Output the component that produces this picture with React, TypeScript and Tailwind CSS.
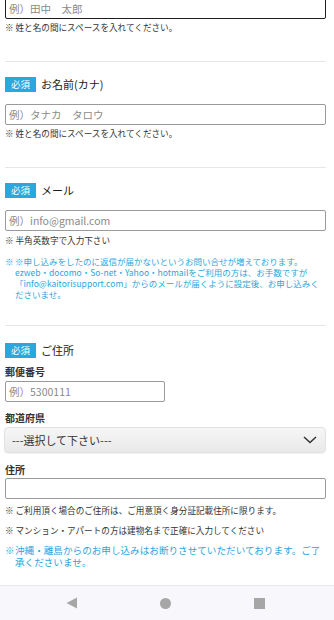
import React from "react";

const jp = { fontFamily: '"Noto Sans CJK JP", "Noto Sans", sans-serif' };

function Badge({ label }: { label: string }) {
  return (
    <div className="flex items-center h-[15px]">
      <span className="flex items-center justify-center w-[31px] h-[15px] bg-[#2ba6de] text-white text-[9.5px] leading-none">
        必須
      </span>
      <span className="ml-[5px] text-[11px] leading-none font-normal text-[#1a1a1a]">{label}</span>
    </div>
  );
}

function Input({ placeholder, className = "" }: { placeholder?: string; className?: string }) {
  return (
    <div
      className={`h-[21px] border border-[#9a9a9a] rounded-[2px] flex items-center px-[3px] text-[10.5px] text-[#8a8a8a] bg-white ${className}`}
    >
      {placeholder}
    </div>
  );
}

export default function App() {
  return (
    <div className="w-[334px] h-[620px] overflow-hidden bg-white flex flex-col" style={jp}>
      <div className="flex flex-col pl-[5px] pr-[8px]">
        <div className="-mt-[2px] h-[21px] border-[1.5px] border-[#1e1e1e] rounded-[2px] flex items-center px-[3px] text-[10.5px] text-[#8a8a8a] bg-white">
          例）田中　太郎
        </div>
        <div className="mt-[2px] text-[8.6px] leading-[12px] text-[#333]">※ 姓と名の間にスペースを入れてください。</div>
        <div className="mt-[28px] h-px bg-[#e6e6e6]" />

        <div className="mt-[15px]">
          <Badge label="お名前(カナ)" />
        </div>
        <Input className="mt-[12px]" placeholder="例）タナカ　タロウ" />
        <div className="mt-[2px] text-[8.6px] leading-[12px] text-[#333]">※ 姓と名の間にスペースを入れてください。</div>
        <div className="mt-[28px] h-px bg-[#e6e6e6]" />

        <div className="mt-[15px]">
          <Badge label="メール" />
        </div>
        <Input className="mt-[12px]" placeholder="例）info@gmail.com" />
        <div className="mt-[3px] text-[8.6px] leading-[12px] text-[#333]">※ 半角英数字で入力下さい</div>
        <div className="mt-[10px] flex text-[8.5px] leading-[11px] text-[#2ba6de]">
          <span className="w-[10px] shrink-0">※</span>
          <span>
            ※申し込みをしたのに返信が届かないというお問い合せが増えております。
            <br />
            ezweb・docomo・So-net・Yahoo・hotmailをご利用の方は、お手数ですが
            <br />
            「info@kaitorisupport.com」からのメールが届くように設定後、お申し込みく
            <br />
            ださいませ。
          </span>
        </div>
        <div className="mt-[25px] h-px bg-[#e6e6e6]" />

        <div className="mt-[17px]">
          <Badge label="ご住所" />
        </div>
        <div className="mt-[7px] text-[10px] leading-[14px] font-bold text-[#333]">郵便番号</div>
        <Input className="mt-[2px] w-[160px]" placeholder="例）5300111" />
        <div className="mt-[9px] text-[10px] leading-[14px] font-bold text-[#333]">都道府県</div>
        <div className="mt-[2px] -ml-px h-[26px] rounded-[4px] border border-[#e2e2e2] bg-gradient-to-b from-[#f6f6f6] to-[#e9e9e9] shadow-[0_1px_1px_rgba(0,0,0,0.05)] flex items-center justify-between pl-[7px] pr-[8px]">
          <span className="text-[11px] text-[#333]">---選択して下さい---</span>
          <svg width="14" height="8" viewBox="0 0 14 8" fill="none">
            <path d="M1 1l6 5.5L13 1" stroke="#333" strokeWidth="1.5" />
          </svg>
        </div>
        <div className="mt-[10px] text-[10px] leading-[14px] font-bold text-[#333]">住所</div>
        <Input className="mt-[1px]" />
        <div className="mt-[5px] text-[8.6px] leading-[12px] text-[#333]">
          ※ ご利用頂く場合のご住所は、ご用意頂く身分証記載住所に限ります。
        </div>
        <div className="mt-[8px] text-[8.6px] leading-[12px] text-[#333]">
          ※ マンション・アパートの方は建物名まで正確に入力してください
        </div>
        <div className="mt-[8px] flex text-[9.6px] leading-[12px] text-[#2ba6de]">
          <span className="w-[10px] shrink-0">※</span>
          <span>沖縄・離島からのお申し込みはお断りさせていただいております。ご了承くださいませ。</span>
        </div>
      </div>

      <div className="mt-auto h-[35px] border-t border-[#e8e7ee] bg-[#f8f7fc] flex items-center justify-center gap-[83px] pr-[4px]">
        <svg width="11" height="12" viewBox="0 0 11 12">
          <path d="M11 0.5V11.5L0.5 6Z" fill="#a6a6a6" />
        </svg>
        <div className="w-[11px] h-[11px] rounded-full bg-[#a6a6a6]" />
        <div className="w-[11px] h-[11px] bg-[#a6a6a6]" />
      </div>
    </div>
  );
}
